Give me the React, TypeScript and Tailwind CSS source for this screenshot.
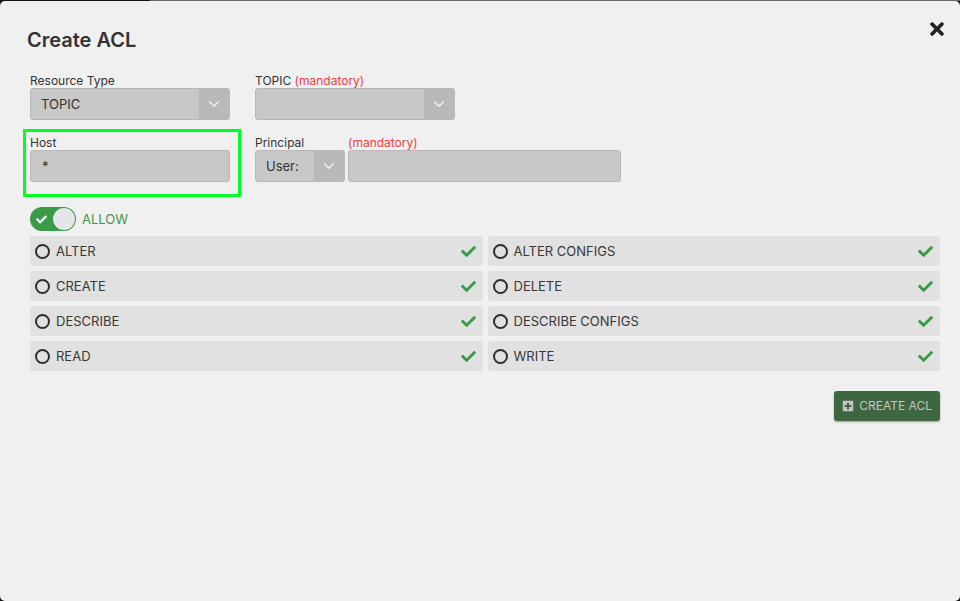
import { ChevronDown } from "lucide-react";
import { FaCheck, FaTimes, FaPlusSquare } from "react-icons/fa";

const ops = [
  ["ALTER", "ALTER CONFIGS"],
  ["CREATE", "DELETE"],
  ["DESCRIBE", "DESCRIBE CONFIGS"],
  ["READ", "WRITE"],
];

function Select({ value, width, arrow = "w-[30px]" }: { value: string; width: string; arrow?: string }) {
  return (
    <div className={`${width} flex h-[32px] overflow-hidden rounded-[3px] border border-[#b8b8b8] bg-[#c8c8c8]`}>
      <div className="flex flex-1 items-center pl-[10px] pt-[2px] text-[13px] text-[#333]">{value}</div>
      <div className={`${arrow} flex items-center justify-center bg-[#b9b9b9]`}>
        <ChevronDown className="h-[18px] w-[18px] text-[#f4f4f4]" strokeWidth={1.6} />
      </div>
    </div>
  );
}

function OpRow({ label }: { label: string }) {
  return (
    <div className="flex h-[30px] items-center rounded-[3px] bg-[#e1e1e1] pl-[5px] pr-[7px]">
      <span className="h-[15px] w-[15px] rounded-full border-[2.5px] border-[#2e2e2e]" />
      <span className="ml-[6px] flex-1 pt-[2px] text-[13px] text-[#383838]">{label}</span>
      <FaCheck className="h-[15px] w-[15px] text-[#3b9a48]" />
    </div>
  );
}

export default function App() {
  return (
    <div className="h-[601px] w-[960px] bg-[#151515]" style={{ fontFamily: "Inter, 'Liberation Sans', sans-serif" }}>
      <div className="flex h-[1px]">
        <div className="w-[150px] bg-[#111]" />
        <div className="flex-1 bg-[#6a6a6a]" />
      </div>
      <div className="relative h-[600px] rounded-[5px] bg-[#f0f0f0] pl-[30px] pr-[20px] pt-[24px]">
        <button className="absolute right-[13px] top-[18px] text-[#222]">
          <FaTimes className="h-[20px] w-[20px]" />
        </button>
        <h2 className="-ml-[3px] text-[20px] font-semibold leading-[30px] text-[#333]">Create ACL</h2>

        <div className="mt-[17px] flex gap-[25px]">
          <div>
            <div className="pt-[1px] text-[12px] leading-[15px] text-[#333]">Resource Type</div>
            <Select value="TOPIC" width="w-[200px]" />
          </div>
          <div>
            <div className="pt-[1px] text-[12px] leading-[15px] text-[#333]">
              TOPIC <span className="text-[#e8423a]">(mandatory)</span>
            </div>
            <Select value="" width="w-[200px]" />
          </div>
        </div>

        <div className="mt-[9px] flex items-start">
          <div className="-ml-[7px] w-[218px] border-[3px] border-[#00ff22] pb-[12px] pl-[4px] pr-[8px] pt-[3px]">
            <div className="pt-[1px] text-[12px] leading-[14px] text-[#333]">Host</div>
            <div className="flex h-[32px] items-center rounded-[3px] border border-[#b8b8b8] bg-[#c8c8c8] pl-[11px] pt-[2px] text-[13px] text-[#333]">
              *
            </div>
          </div>
          <div className="ml-[14px] mt-[6px]">
            <div className="flex pt-[1px] text-[12px] leading-[14px]">
              <span className="w-[93px] text-[#333]">Principal</span>
              <span className="text-[#e8423a]">(mandatory)</span>
            </div>
            <div className="flex gap-[3px]">
              <Select value="User:" width="w-[90px]" />
              <div className="h-[32px] w-[273px] rounded-[3px] border border-[#b8b8b8] bg-[#c8c8c8]" />
            </div>
          </div>
        </div>

        <div className="mt-[10px] flex items-center">
          <div className="flex h-[24px] w-[46px] items-center justify-between rounded-full bg-[#3b9a48] pl-[6px] pr-[1px]">
            <FaCheck className="h-[11px] w-[11px] text-white" />
            <span className="h-[22px] w-[22px] rounded-full bg-[#e4e6ea]" />
          </div>
          <span className="ml-[6px] pt-[2px] text-[13px] text-[#3b9a48]">ALLOW</span>
        </div>

        <div className="mt-[5px] grid grid-cols-2 gap-[5px]">
          {ops.map(([a, b]) => (
            <>
              <OpRow key={a} label={a} />
              <OpRow key={b} label={b} />
            </>
          ))}
        </div>

        <div className="mt-[20px] flex justify-end">
          <button className="flex h-[30px] items-center gap-[5px] rounded-[3px] bg-[#3d6741] px-[8px] text-[12px] text-[#c4c4c4] shadow-[0_1px_2px_rgba(0,0,0,0.35)]">
            <FaPlusSquare className="h-[12px] w-[12px]" />
            CREATE ACL
          </button>
        </div>
      </div>
    </div>
  );
}
